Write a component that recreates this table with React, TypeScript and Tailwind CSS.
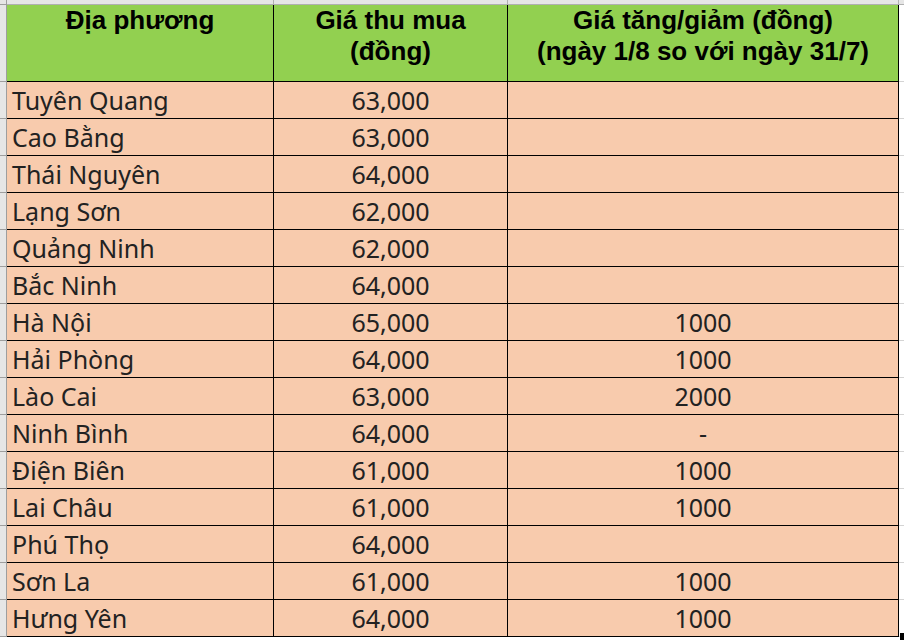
import React from "react";

type Row = { place: string; price: string; change: string };

const rows: Row[] = [
  { place: "Tuyên Quang", price: "63,000", change: "" },
  { place: "Cao Bằng", price: "63,000", change: "" },
  { place: "Thái Nguyên", price: "64,000", change: "" },
  { place: "Lạng Sơn", price: "62,000", change: "" },
  { place: "Quảng Ninh", price: "62,000", change: "" },
  { place: "Bắc Ninh", price: "64,000", change: "" },
  { place: "Hà Nội", price: "65,000", change: "1000" },
  { place: "Hải Phòng", price: "64,000", change: "1000" },
  { place: "Lào Cai", price: "63,000", change: "2000" },
  { place: "Ninh Bình", price: "64,000", change: "-" },
  { place: "Điện Biên", price: "61,000", change: "1000" },
  { place: "Lai Châu", price: "61,000", change: "1000" },
  { place: "Phú Thọ", price: "64,000", change: "" },
  { place: "Sơn La", price: "61,000", change: "1000" },
  { place: "Hưng Yên", price: "64,000", change: "1000" },
];

export default function App() {
  return (
    <div className="relative w-[904px] h-[640px] overflow-hidden bg-white">
      {/* excel column header strip */}
      <div className="flex h-[5px]">
        <div className="w-[7px] bg-[#e6e6e6] border-r border-b border-[#9e9e9e]" />
        <div className="w-[267px] bg-[#e6e6e6] border-r border-b border-[#b0b0b0]" />
        <div className="w-[234px] bg-[#e6e6e6] border-r border-b border-[#b0b0b0]" />
        <div className="w-[391px] bg-[#e6e6e6] border-r border-b border-[#b0b0b0]" />
        <div className="flex-1 bg-[#e6e6e6] border-b border-[#b0b0b0]" />
      </div>

      {/* header */}
      <div className="flex h-[77px] font-['Liberation_Sans',Arial,sans-serif] font-bold text-[26px] leading-[31px] text-black">
        <div className="w-[7px] bg-[#e6e6e6] border-r border-b border-[#9e9e9e]" />
        <div className="w-[267px] bg-[#92d050] border-r border-b border-black text-center whitespace-nowrap">
          Địa phương
        </div>
        <div className="w-[234px] bg-[#92d050] border-r border-b border-black text-center whitespace-nowrap">
          Giá thu mua
          <br />
          (đồng)
        </div>
        <div className="w-[391px] bg-[#92d050] border-r border-b border-black text-center whitespace-nowrap">
          Giá tăng/giảm (đồng)
          <br />
          (ngày 1/8 so với ngày 31/7)
        </div>
        <div className="flex-1 bg-white border-b border-[#d4d4d4]" />
      </div>

      {/* body */}
      {rows.map((r) => (
        <div
          key={r.place}
          className="flex h-[37px] font-['Noto_Sans','Open_Sans',sans-serif] text-[25px] leading-[36px] text-[#222]"
        >
          <div className="w-[7px] bg-[#e6e6e6] border-r border-b border-[#9e9e9e]" />
          <div className="w-[267px] bg-[#f8cbad] border-r border-b border-black pl-[5px] whitespace-nowrap">
            {r.place}
          </div>
          <div className="w-[234px] bg-[#f8cbad] border-r border-b border-black text-center">
            {r.price}
          </div>
          <div className="w-[391px] bg-[#f8cbad] border-r border-b border-black text-center">
            {r.change}
          </div>
          <div className="flex-1 bg-white border-b border-[#d4d4d4]" />
        </div>
      ))}

      {/* fill handle */}
      <div className="absolute left-[900px] top-[633px] w-[6px] h-[8px] bg-black" />
    </div>
  );
}
